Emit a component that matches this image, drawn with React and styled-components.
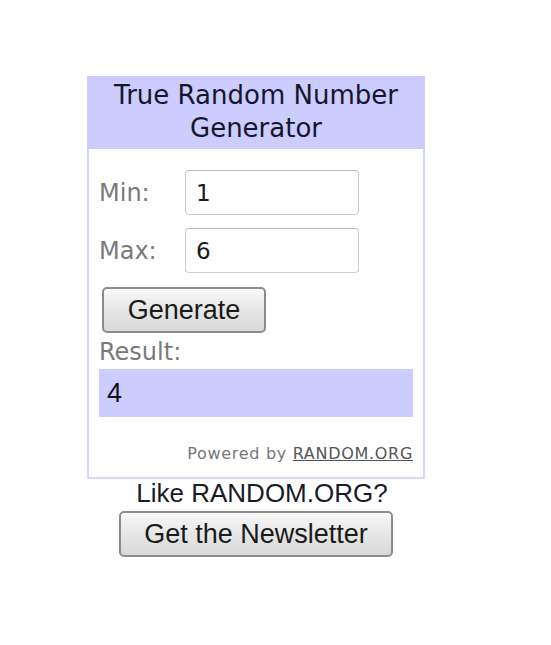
import styled, { createGlobalStyle } from "styled-components";

const GlobalStyle = createGlobalStyle`
  html, body {
    margin: 0;
    padding: 0;
    background: #ffffff;
  }
`;

const Page = styled.div`
  padding: 76px 0 0 87px;
  width: 338px;
`;

const Widget = styled.div`
  width: 338px;
  box-sizing: border-box;
  border: 2px solid #d6d6fb;
  background: #ffffff;
  font-family: "DejaVu Sans", Verdana, sans-serif;
`;

const Header = styled.div`
  background: #ccccff;
  color: #16162a;
  text-align: center;
  font-size: 26px;
  line-height: 33px;
  padding: 3px 0 4px;
  margin: -2px -2px 0;
`;

const Body = styled.div`
  padding: 21px 10px 14px 10px;
`;

const Row = styled.div`
  display: flex;
  align-items: center;
  height: 45px;
  margin-bottom: ${(p) => p.$gap || 0}px;
`;

const Label = styled.span`
  width: 86px;
  color: #7a7a7a;
  font-size: 24px;
`;

const Input = styled.input`
  width: 174px;
  height: 45px;
  box-sizing: border-box;
  border: 1px solid #cfcfcf;
  border-top-color: #b8b8b8;
  border-radius: 4px;
  padding: 0 10px;
  font-family: "DejaVu Sans", Verdana, sans-serif;
  font-size: 23px;
  color: #1a1a1a;
  outline: none;
`;

const Button = styled.button`
  display: block;
  box-sizing: border-box;
  width: ${(p) => p.$w}px;
  height: 46px;
  margin-left: ${(p) => p.$ml || 0}px;
  padding: 0;
  font-family: "Liberation Sans", Arial, sans-serif;
  font-size: 27px;
  color: #1a1a1a;
  border: 2px solid #8c8c8c;
  border-radius: 5px;
  background: linear-gradient(#f8f8f8, #e6e6e6 50%, #d9d9d9);
  cursor: pointer;
`;

const ResultLabel = styled.div`
  color: #7a7a7a;
  font-size: 24px;
  line-height: 28px;
  margin-top: 5px;
`;

const ResultBox = styled.div`
  background: #ccccff;
  height: 48px;
  margin-top: 3px;
  padding-left: 8px;
  display: flex;
  align-items: center;
  font-family: "Liberation Sans", Arial, sans-serif;
  font-size: 27px;
  color: #111122;
`;

const Powered = styled.div`
  text-align: right;
  margin-top: 27px;
  font-size: 16px;
  line-height: 19px;
  color: #777777;
  letter-spacing: 0.7px;

  a {
    color: #555555;
    text-decoration: underline;
  }
`;

const Below = styled.div`
  display: flex;
  flex-direction: column;
  align-items: center;
  font-family: "Liberation Sans", Arial, sans-serif;
`;

const Like = styled.div`
  font-size: 26px;
  line-height: 28px;
  color: #1a1a2a;
  padding-left: 12px;
  margin: 0 0 4px;
`;

export default function App() {
  return (
    <>
      <GlobalStyle />
      <Page>
        <Widget>
          <Header>
            True Random Number
            <br />
            Generator
          </Header>
          <Body>
            <Row $gap={13}>
              <Label>Min:</Label>
              <Input defaultValue="1" />
            </Row>
            <Row $gap={14}>
              <Label>Max:</Label>
              <Input defaultValue="6" />
            </Row>
            <Button $w={164} $ml={3}>Generate</Button>
            <ResultLabel>Result:</ResultLabel>
            <ResultBox>4</ResultBox>
            <Powered>
              Powered by <a href="#">RANDOM.ORG</a>
            </Powered>
          </Body>
        </Widget>
        <Below>
          <Like>Like RANDOM.ORG?</Like>
          <Button $w={274}>Get the Newsletter</Button>
        </Below>
      </Page>
    </>
  );
}
